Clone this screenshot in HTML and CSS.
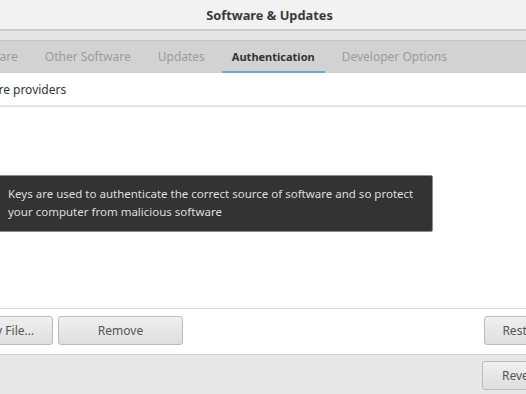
FILE: index.html
```html
<!DOCTYPE html>
<html>
<head>
    <meta charset="utf-8">
    <title>Software &amp; Updates</title>
    <link rel="stylesheet" href="styles.css">
</head>
<body>
    <div class="window">
        <div class="titlebar">Software &amp; Updates</div>

        <div class="notebook">
            <div class="tabs">
                <div class="tab first">Ubuntu Software</div>
                <div class="tab">Other Software</div>
                <div class="tab">Updates</div>
                <div class="tab active">Authentication</div>
                <div class="tab">Developer Options</div>
            </div>

            <div class="page">
                <div class="list-header">Trusted software providers</div>
                <div class="list"></div>
                <div class="button-row">
                    <button type="button" class="btn import-btn">Import Key File...</button>
                    <button type="button" class="btn remove-btn">Remove</button>
                    <div class="spacer"></div>
                    <button type="button" class="btn restore-btn">Restore Defaults</button>
                </div>
            </div>
        </div>

        <div class="footer">
            <button type="button" class="btn revert-btn">Revert</button>
        </div>

        <div class="tooltip">
            Keys are used to authenticate the correct source of software and so protect
            your computer from malicious software
        </div>
    </div>
</body>
</html>
```

FILE: styles.css
```css
body {
    margin: 0;
    font-family: "Noto Sans", "DejaVu Sans", sans-serif;
    font-size: 12px;
    color: #2e3436;
    background-color: #e8e8e8;
    overflow: hidden;
}
.window {
    position: relative;
    width: 526px;
    height: 394px;
    overflow: hidden;
}
.titlebar {
    height: 29px;
    line-height: 30px;
    padding-left: 13px;
    text-align: center;
    font-size: 12.8px;
    font-weight: bold;
    color: #3a3a3a;
    background: #f2f2f2;
    border-bottom: 2px solid #cdcdcd;
}
.notebook {
    padding-top: 9px;
    background: #e6e6e6;
}
.tabs {
    display: flex;
    gap: 7px;
    height: 32px;
    background: #d2d2d2;
    border-top: 1px solid #c6c6c6;
}
.tab {
    padding: 0 10px;
    line-height: 31px;
    color: #9c9c9c;
    white-space: nowrap;
    border-bottom: 2px solid transparent;
    box-sizing: border-box;
    height: 32px;
}
.tab.first {
    margin-left: -88px;
}
.tab.active {
    color: #2e3436;
    font-size: 11px;
    font-weight: bold;
    border-bottom-color: #6fa3dc;
}
.page {
    background: #fff;
    border-bottom: 1px solid #cfcfcf;
}
.list-header {
    height: 32px;
    line-height: 34px;
    margin-left: -85px;
    white-space: nowrap;
    border-bottom: 2px solid #e2e2e2;
}
.list {
    height: 201px;
    border-bottom: 1px solid #dadada;
}
.button-row {
    display: flex;
    gap: 5px;
    padding: 7px 0 9px 0;
}
.spacer {
    flex: 1;
}
.btn {
    font-family: inherit;
    font-size: 12px;
    color: #555;
    height: 29px;
    padding: 0 16px;
    border: 1px solid #bcbcbc;
    border-radius: 3px;
    background: linear-gradient(#f0f0f0, #dedede);
    white-space: nowrap;
}
.import-btn {
    margin-left: -67px;
    width: 120px;
    padding: 0 16px 0 4px;
}
.remove-btn {
    width: 125px;
}
.restore-btn {
    width: 130px;
    margin-right: -88px;
}
.footer {
    display: flex;
    justify-content: flex-end;
    padding-top: 6px;
}
.revert-btn {
    width: 76px;
    margin-right: -32px;
}
.tooltip {
    position: absolute;
    left: -2px;
    top: 175px;
    width: 420px;
    padding: 9px 4px 10px 9px;
    background: #333;
    border: 1px solid #8c8c8c;
    border-radius: 2px;
    color: #dedede;
    font-size: 11.5px;
    line-height: 18px;
}
```
